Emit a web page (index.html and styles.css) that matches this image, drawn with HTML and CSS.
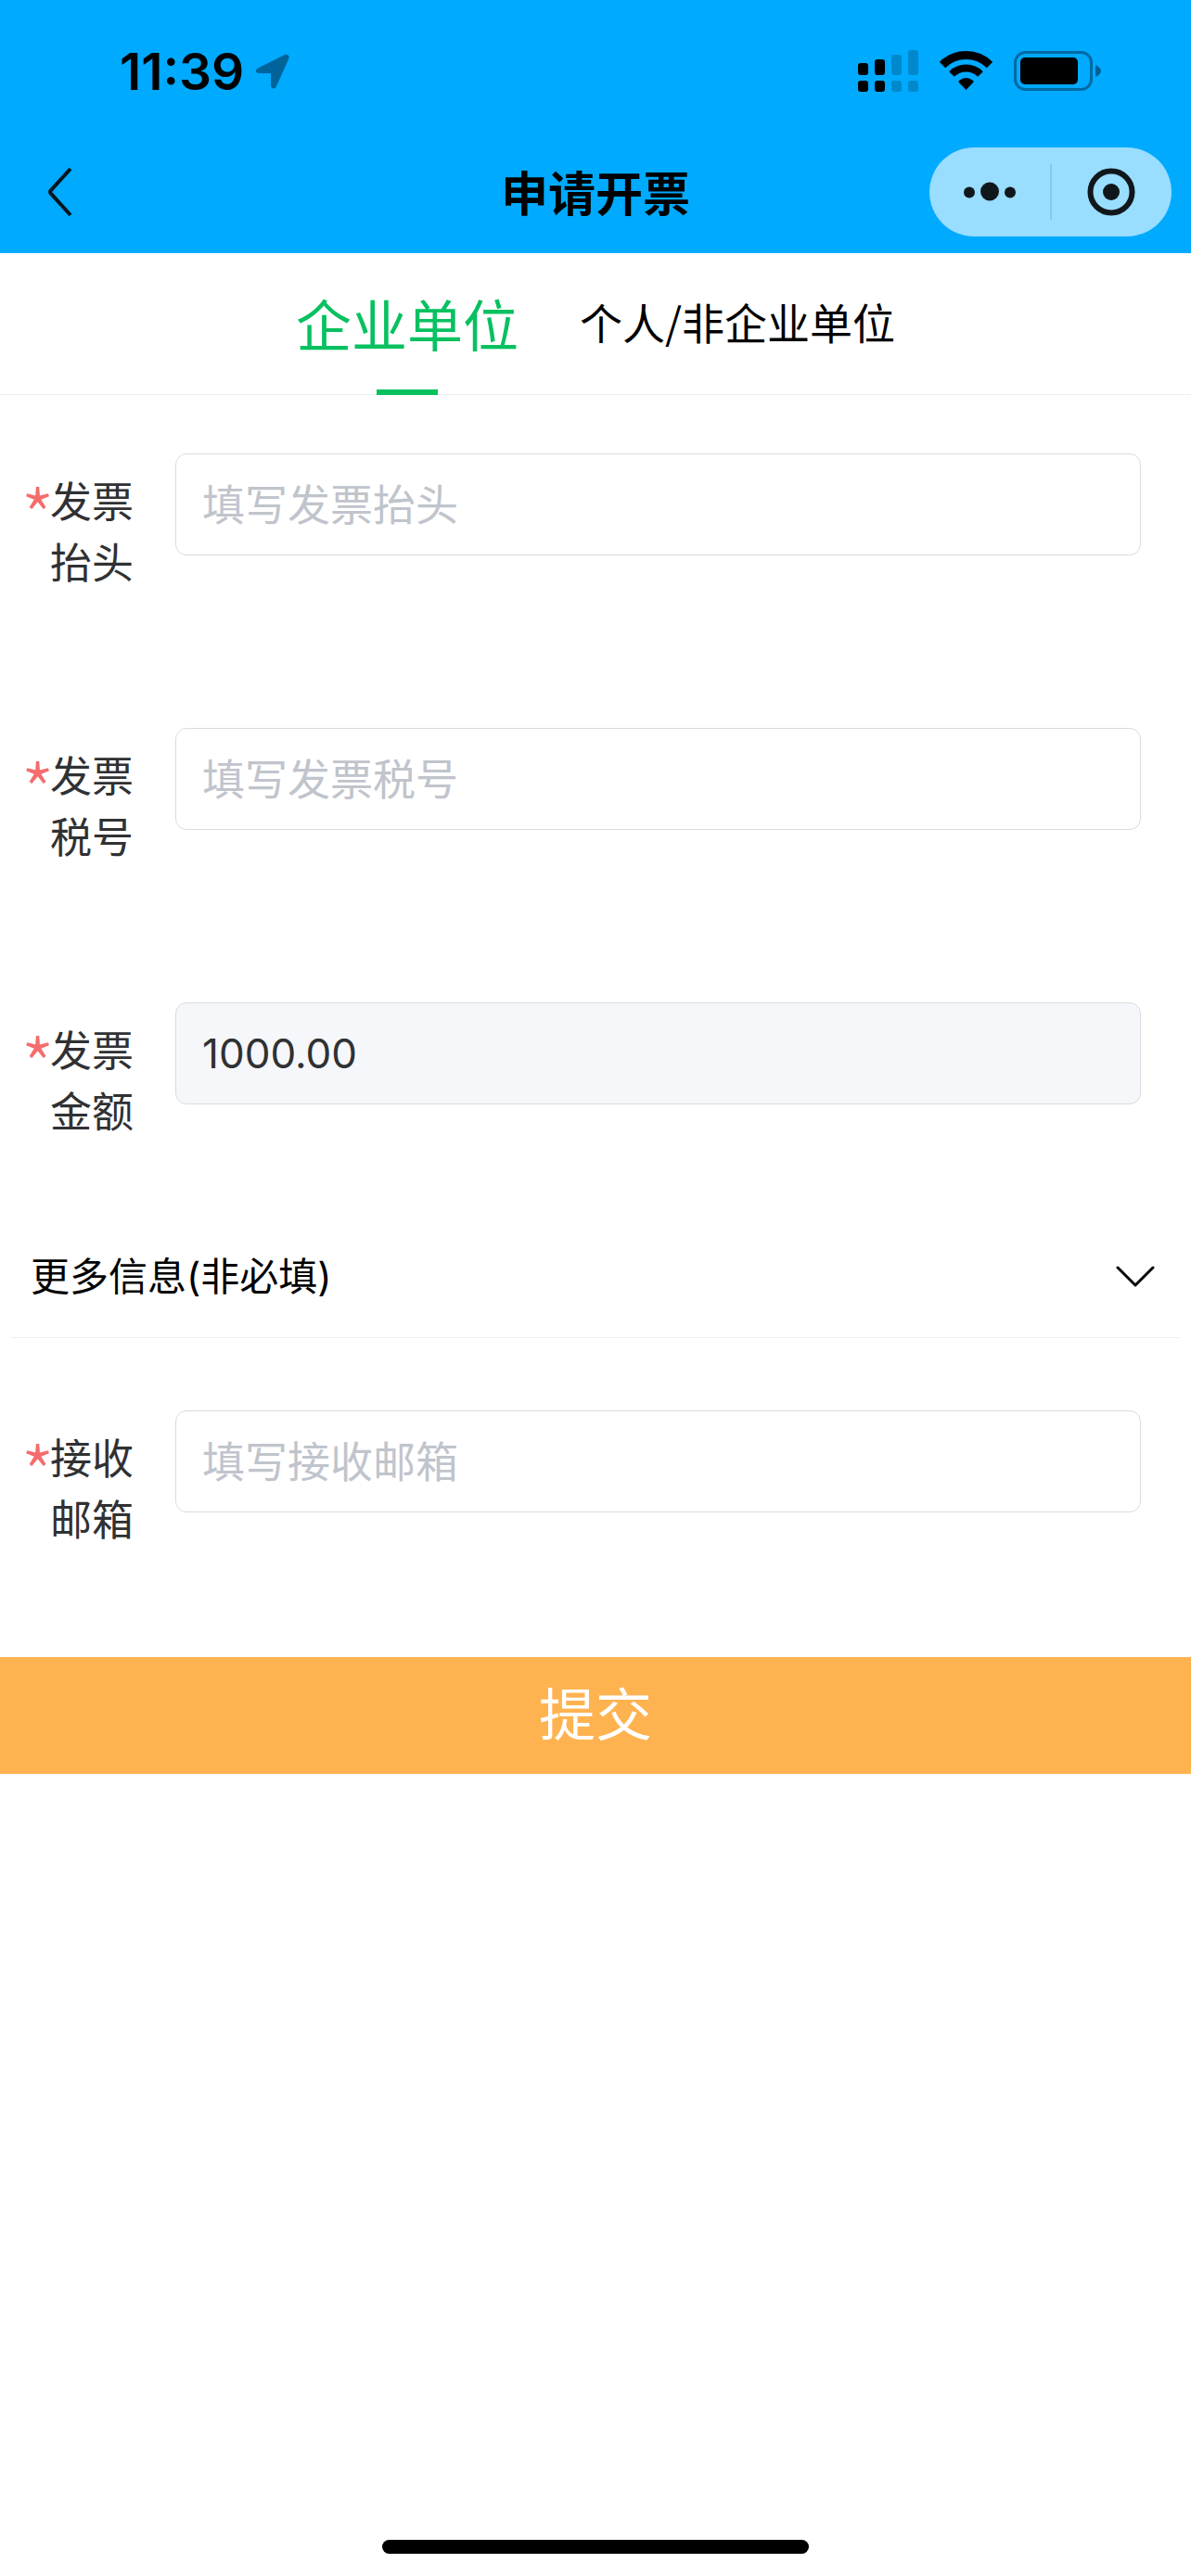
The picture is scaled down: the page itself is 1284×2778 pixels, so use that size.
FILE: index.html
```html
<!DOCTYPE html>
<html lang="zh-CN">
<head>
    <meta charset="UTF-8">
    <meta name="viewport" content="width=device-width, initial-scale=1">
    <title>申请开票</title>
    <link rel="stylesheet" href="styles.css">
</head>
<body>
    <header class="header">
        <div class="status">
            <div class="status-left">
                <span>11:39</span>
                <svg width="36" height="38" viewBox="0 0 36 38"><path d="M31 1 L3 15 C-1 17 -1 21 3 21 H16 V34 C16 38 20 39 22 35 L35 6 C37 2 34 0 31 1 Z" fill="#00639a"/></svg>
            </div>
            <div class="status-right">
                <svg width="65" height="46" viewBox="0 0 65 46">
                    <rect x="0" y="14" width="11" height="13" rx="3"/>
                    <rect x="18" y="10" width="11" height="17" rx="3"/>
                    <rect x="0" y="33" width="11" height="12" rx="3"/>
                    <rect x="18" y="33" width="11" height="12" rx="3"/>
                    <g fill="#0088cc">
                        <rect x="36" y="5" width="11" height="22" rx="3"/>
                        <rect x="54" y="0" width="11" height="27" rx="3"/>
                        <rect x="36" y="33" width="11" height="12" rx="3"/>
                        <rect x="54" y="33" width="11" height="12" rx="3"/>
                    </g>
                </svg>
                <svg width="57" height="46" viewBox="0 0 57 46">
                    <path d="M3 16 A36 36 0 0 1 54 16" fill="none" stroke="#000" stroke-width="9"/>
                    <path d="M13 26 A22 22 0 0 1 44 26" fill="none" stroke="#000" stroke-width="8"/>
                    <path d="M20 34 Q28.5 26 37 34 L28.5 43 Z"/>
                </svg>
                <svg width="94" height="46" viewBox="0 0 94 46">
                    <rect x="1.5" y="2.5" width="82" height="40" rx="11" fill="none" stroke="#006aa3" stroke-width="3"/>
                    <rect x="7" y="8" width="62" height="29" rx="5"/>
                    <path d="M88 16 Q94 19 94 22.500 Q94 26 88 29 Z" fill="#006099"/>
                </svg>
            </div>
        </div>
        <nav class="nav">
            <button class="back" type="button" aria-label="返回">
                <svg width="28" height="54" viewBox="0 0 28 54"><path d="M25 2 L4 25 Q2 27 4 29 L25 52" fill="none" stroke="#04151e" stroke-width="4"/></svg>
            </button>
            <h1 class="title">申请开票</h1>
            <div class="capsule">
                <button type="button" aria-label="更多">
                    <svg width="56" height="52" viewBox="0 0 56 52" fill="#10171b"><circle cx="6" cy="26.500" r="6"/><circle cx="28" cy="25.500" r="10"/><circle cx="50" cy="26.500" r="6"/></svg>
                </button>
                <button type="button" aria-label="关闭">
                    <svg width="52" height="52" viewBox="0 0 52 52" fill="#10171b"><circle cx="26" cy="26" r="22.500" fill="none" stroke="#10171b" stroke-width="6"/><circle cx="26" cy="26" r="9"/></svg>
                </button>
            </div>
        </nav>
    </header>

    <div class="tabs">
        <button class="tab active" type="button">企业单位</button>
        <button class="tab" type="button">个人/非企业单位</button>
    </div>

    <form class="form">
        <div class="fields">
            <div class="field">
                <label for="taitou"><span class="star">*</span><span>发票抬头</span></label>
                <input id="taitou" name="taitou" type="text" placeholder="填写发票抬头">
            </div>
            <div class="field">
                <label for="shuihao"><span class="star">*</span><span>发票税号</span></label>
                <input id="shuihao" name="shuihao" type="text" placeholder="填写发票税号">
            </div>
            <div class="field">
                <label for="jine"><span class="star">*</span><span>发票金额</span></label>
                <input id="jine" name="jine" type="text" value="1000.00" disabled>
            </div>
        </div>
        <button class="more" type="button">
            <span>更多信息(非必填)</span>
            <svg width="42" height="24" viewBox="0 0 42 24"><path d="M2 2 L21 21 L40 2" fill="none" stroke="#000" stroke-width="3" stroke-linecap="round" stroke-linejoin="round"/></svg>
        </button>
        <div class="fields">
            <div class="field">
                <label for="youxiang"><span class="star">*</span><span>接收邮箱</span></label>
                <input id="youxiang" name="youxiang" type="email" placeholder="填写接收邮箱">
            </div>
        </div>
        <button class="submit" type="submit">提交</button>
    </form>

    <div class="home-bar"></div>
</body>
</html>
```
FILE: styles.css
```css
*
{
    box-sizing: border-box;
}
body
{
    margin: 0;
    min-height: 100vh;
    display: flex;
    flex-direction: column;
    background-color: #fff;
    color: #000;
    font-family: Inter, "Noto Sans CJK SC", sans-serif;
    font-size: 45px;
    line-height: 66px;
}
button
{
    margin: 0;
    padding: 0;
    border: 0;
    background: none;
    color: inherit;
    font: inherit;
    cursor: pointer;
}
svg
{
    display: block;
}

/* status bar and navigation */
.header
{
    background-color: #00aaff;
}
.status
{
    display: flex;
    justify-content: space-between;
    align-items: center;
    padding: 44px 97px 31px 129px;
}
.status-left
{
    display: flex;
    align-items: center;
    gap: 13px;
    font-size: 55px;
    font-weight: 600;
}
.status-right
{
    display: flex;
    gap: 23px;
}
.nav
{
    display: grid;
    grid-template-columns: 1fr auto 1fr;
    align-items: center;
    padding: 18px 21px;
}
.back
{
    justify-self: start;
    padding: 20px 30px;
}
.title
{
    margin: 0;
    padding-bottom: 2px;
    font-family: "Noto Sans CJK SC", sans-serif;
    font-size: 51px;
    font-weight: 700;
}
.capsule
{
    justify-self: end;
    display: flex;
    width: 261px;
    height: 96px;
    padding: 18px 0;
    border-radius: 48px;
    background-color: #99ddff;
}
.capsule button
{
    flex: 1;
    display: flex;
    justify-content: center;
    align-items: center;
}
.capsule button + button
{
    border-left: 2px solid #85c9ea;
}

/* tabs */
.tabs
{
    display: flex;
    justify-content: center;
    gap: 66px;
    border-bottom: 1px solid #ededed;
}
.tab
{
    padding: 40px 0 46px;
    font-family: "Noto Sans CJK SC", sans-serif;
    font-size: 46px;
}
.tab.active
{
    display: flex;
    flex-direction: column;
    align-items: center;
    gap: 39px;
    padding: 42px 0 0;
    margin-bottom: -1px;
    color: #07c160;
    font-size: 60px;
}
.tab.active::after
{
    content: "";
    width: 66px;
    height: 6px;
    background-color: #07c160;
}

/* form */
.fields
{
    display: grid;
    gap: 144px;
    padding: 63px 54px 78px 27px;
}
.field
{
    display: flex;
    align-items: flex-start;
}
.field label
{
    display: flex;
    flex: none;
    width: 162px;
    padding: 20px 45px 0 0;
    color: #303133;
}
/* the asterisk is set larger than the label but keeps its row height */
.star
{
    display: flex;
    justify-content: center;
    flex: none;
    width: 27px;
    height: 66px;
    color: #f56c6c;
    font-family: "Noto Sans CJK SC", sans-serif;
    font-size: 84px;
    font-weight: 300;
    line-height: 92px;
}
.field input
{
    flex: 1;
    min-width: 0;
    height: 110px;
    padding: 0 28px;
    border: 1px solid #dadbde;
    border-radius: 12px;
    background-color: #fff;
    color: #303133;
    font: inherit;
    font-size: 46px;
}
.field input::placeholder
{
    color: #c0c4cc;
}
.field input:disabled
{
    background-color: #f5f7fb;
    font-size: 44px;
}
.more
{
    display: flex;
    justify-content: space-between;
    align-items: center;
    width: calc(100% - 24px);
    margin: 0 12px;
    padding: 33px 27px 32px 21px;
    border-bottom: 1px solid #ededed;
    font-size: 42px;
}
.more + .fields
{
    padding-bottom: 114px;
    padding-top: 78px;
}
.submit
{
    display: block;
    width: 100%;
    padding: 30px 0;
    background-color: #ffb350;
    color: #fff;
    font-size: 61px;
}
.home-bar
{
    width: 460px;
    height: 15px;
    margin: auto auto 24px;
    border-radius: 8px;
    background-color: #000;
}
```
